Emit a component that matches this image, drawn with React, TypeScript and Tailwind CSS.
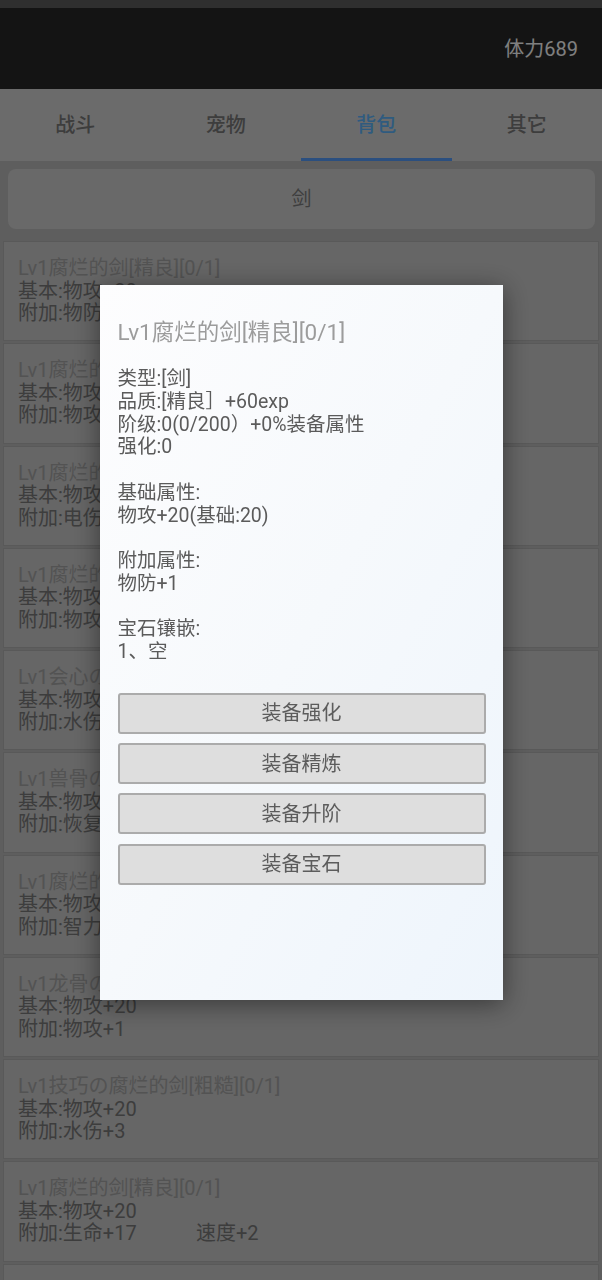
import React from "react";

type Item = { title: string; base: string; extra: string[] };

const items: Item[] = [
  { title: "Lv1腐烂的剑[精良][0/1]", base: "基本:物攻+20", extra: ["物防+1"] },
  { title: "Lv1腐烂的剑[精良][0/1]", base: "基本:物攻+20", extra: ["物攻+1"] },
  { title: "Lv1腐烂的剑[精良][0/1]", base: "基本:物攻+20", extra: ["电伤+3"] },
  { title: "Lv1腐烂的剑[精良][0/1]", base: "基本:物攻+20", extra: ["物攻+1"] },
  { title: "Lv1会心の腐烂的剑[粗糙][0/1]", base: "基本:物攻+20", extra: ["水伤+3"] },
  { title: "Lv1兽骨の腐烂的剑[粗糙][0/1]", base: "基本:物攻+20", extra: ["恢复+2"] },
  { title: "Lv1腐烂的剑[精良][0/1]", base: "基本:物攻+20", extra: ["智力+1"] },
  { title: "Lv1龙骨の腐烂的剑[粗糙][0/1]", base: "基本:物攻+20", extra: ["物攻+1"] },
  { title: "Lv1技巧の腐烂的剑[粗糙][0/1]", base: "基本:物攻+20", extra: ["水伤+3"] },
  { title: "Lv1腐烂的剑[精良][0/1]", base: "基本:物攻+20", extra: ["生命+17", "速度+2"] },
  { title: "Lv1腐烂的剑[精良][0/1]", base: "基本:物攻+20", extra: ["物防+1"] },
];

const tabs = ["战斗", "宠物", "背包", "其它"];

const detail = `类型:[剑]
品质:[精良］+60exp
阶级:0(0/200）+0%装备属性
强化:0

基础属性:
物攻+20(基础:20)

附加属性:
物防+1

宝石镶嵌:
1、空`;

const actions = ["装备强化", "装备精炼", "装备升阶", "装备宝石"];

export default function App() {
  return (
    <div
      className="relative min-h-[1280px] w-full bg-[#bcbcbc]"
      style={{ fontFamily: 'Roboto, "Noto Sans CJK SC", "Noto Sans", sans-serif' }}
    >
      {/* status strip */}
      <div className="h-[8px] bg-[#5e5e5e]" />
      {/* header */}
      <div className="flex h-[81px] items-center justify-end bg-[#282828] pr-[24px]">
        <span className="text-[20px] text-white">体力689</span>
      </div>
      {/* tabs */}
      <div className="grid h-[72px] grid-cols-4 bg-[#d6d6d6]">
        {tabs.map((t, i) => (
          <div key={t} className="relative flex items-center justify-center">
            <span
              className={
                i === 2
                  ? "text-[20px] font-medium text-[#5eb6ff]"
                  : "text-[20px] font-medium text-[#7a7a7a]"
              }
            >
              {t}
            </span>
            {i === 2 && (
              <div className="absolute bottom-0 left-0 right-0 h-[3px] bg-[#569eff]" />
            )}
          </div>
        ))}
      </div>
      {/* filter button */}
      <div className="px-[8px] pr-[7px] pt-[8px]">
        <div className="flex h-[60px] items-center justify-center rounded-[8px] bg-[#d2d2d2]">
          <span className="text-[20px] text-[#7c7c7c]">剑</span>
        </div>
      </div>
      {/* list */}
      <div className="flex flex-col gap-[2px] px-[3px] pt-[12px]">
        {items.map((it, idx) => (
          <div
            key={idx}
            className="h-[100.25px] border border-[#b2b2b2] bg-[#cccccc] pl-[14px] pt-[15px] text-[20px] leading-[22.5px]"
          >
            <div className="text-[#a6a6a6]">{it.title}</div>
            <div className="text-[#7a7a7a]">{it.base}</div>
            <div className="flex text-[#7a7a7a]">
              <span className="w-[178px]">附加:{it.extra[0]}</span>
              {it.extra[1] && <span>{it.extra[1]}</span>}
            </div>
          </div>
        ))}
      </div>

      {/* overlay + dialog */}
      <div className="fixed inset-0 flex items-start justify-center bg-black/50 pt-[285px]">
        <div className="flex h-[715px] w-[403px] flex-col bg-gradient-to-br from-[#fdfdfe] via-[#f6f9fc] to-[#eef5fc] pl-[18px] pr-[17px] pt-[32px] shadow-[0_4px_24px_rgba(0,0,0,0.45)]">
          <div className="text-[22.5px] leading-[30px] text-[#9c9c9c]">Lv1腐烂的剑[精良][0/1]</div>
          <div className="mt-[21px] whitespace-pre-line text-[19.5px] leading-[22.75px] text-[#5b5b5b]">
            {detail}
          </div>
          <div className="mt-[29px] flex flex-col gap-[9.3px]">
            {actions.map((a) => (
              <button
                key={a}
                className="flex h-[41px] items-center justify-center rounded-[3px] border-2 border-[#ababab] bg-[#dedede] text-[20px] text-[#5c5c5c]"
              >
                {a}
              </button>
            ))}
          </div>
        </div>
      </div>
    </div>
  );
}
